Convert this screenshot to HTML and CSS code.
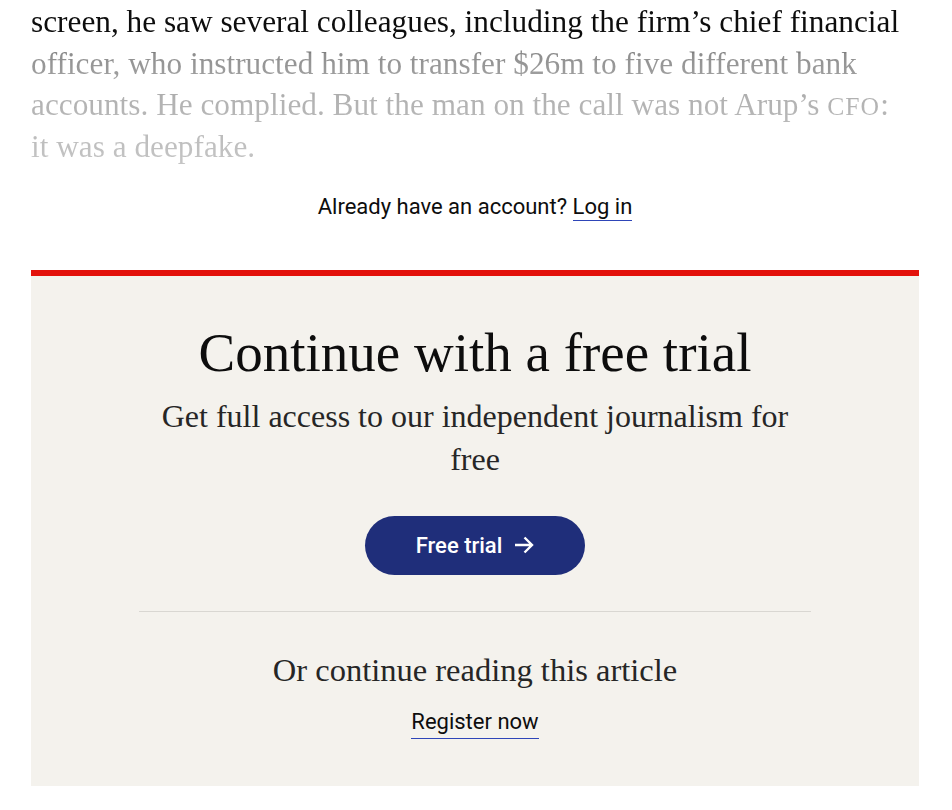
FILE: index.html
```html
<!DOCTYPE html>
<html lang="en">
<head>
<meta charset="utf-8">
<title>Continue with a free trial</title>
<link rel="stylesheet" href="styles.css">
</head>
<body>
<main class="page">
  <p class="teaser">screen, he saw several colleagues, including the firm’s chief financial officer, who instructed him to transfer $26m to five different bank accounts. He complied. But the man on the call was not Arup’s <span class="sc">cfo</span>: it was a deepfake.</p>
  <p class="account">Already have an account? <a class="link" href="#">Log in</a></p>
  <section class="paywall">
    <h2 class="title">Continue with a free trial</h2>
    <p class="subtitle">Get full access to our independent journalism for free</p>
    <a class="cta" href="#">Free trial
      <svg class="arrow" width="20" height="18" viewBox="0 0 20 18" aria-hidden="true"><path d="M1 9H18M10.5 1.5L18 9L10.5 16.5" fill="none" stroke="#fff" stroke-width="2.4"/></svg>
    </a>
    <hr class="divider">
    <h3 class="alt">Or continue reading this article</h3>
    <a class="link register" href="#">Register now</a>
  </section>
</main>
</body>
</html>
```

FILE: styles.css
```css
html, body {
  margin: 0;
  background: #fff;
}
.page {
  width: 888px;
  margin-left: 31px;
}
.teaser {
  margin: 0;
  font-family: "Liberation Serif", serif;
  font-size: 31.3px;
  line-height: 41.7px;
  width: 880px;
  padding-top: 1px;
  background: linear-gradient(to bottom, #0d0d0d 0, #0d0d0d 42px, #8e8e8e 54px, #b2b2b2 100px, #c6c6c6 168px);
  -webkit-background-clip: text;
  background-clip: text;
  color: transparent;
}
.sc {
  text-transform: uppercase;
  font-size: 0.82em;
  line-height: 0;
  letter-spacing: 0.04em;
}
.account {
  margin: 24px 0 0;
  text-align: center;
  font-family: Roboto, sans-serif;
  font-size: 22px;
  line-height: 30px;
  color: #0d0d0d;
}
.link {
  color: #0d0d0d;
  text-decoration: none;
  border-bottom: 1px solid #2e45b8;
  padding-bottom: 1px;
}
.paywall {
  margin-top: 48px;
  background: #f4f2ed;
  border-top: 6px solid #e3120b;
  display: flex;
  flex-direction: column;
  align-items: center;
  padding: 47px 0 47px;
  text-align: center;
}
.title {
  margin: 0;
  font-family: "Liberation Serif", serif;
  font-weight: 400;
  font-size: 55px;
  line-height: 60px;
  color: #0d0d0d;
}
.subtitle {
  margin: 12px 0 0;
  width: 660px;
  font-family: "Liberation Serif", serif;
  font-size: 32px;
  line-height: 43px;
  color: #262626;
}
.cta {
  margin-top: 35px;
  width: 220px;
  height: 59px;
  border-radius: 30px;
  background: #1f2e7a;
  color: #fff;
  text-decoration: none;
  font-family: Roboto, sans-serif;
  font-weight: 500;
  font-size: 22px;
  display: flex;
  align-items: center;
  justify-content: center;
  gap: 12px;
}
.divider {
  margin: 36px 0 0;
  width: 672px;
  border: 0;
  border-top: 1px solid #d9d7d2;
}
.alt {
  margin: 38px 0 0;
  font-family: "Liberation Serif", serif;
  font-weight: 400;
  font-size: 32.5px;
  line-height: 40px;
  color: #262626;
}
.register {
  margin-top: 17px;
  font-family: Roboto, sans-serif;
  font-size: 22px;
  line-height: 30px;
}
```
